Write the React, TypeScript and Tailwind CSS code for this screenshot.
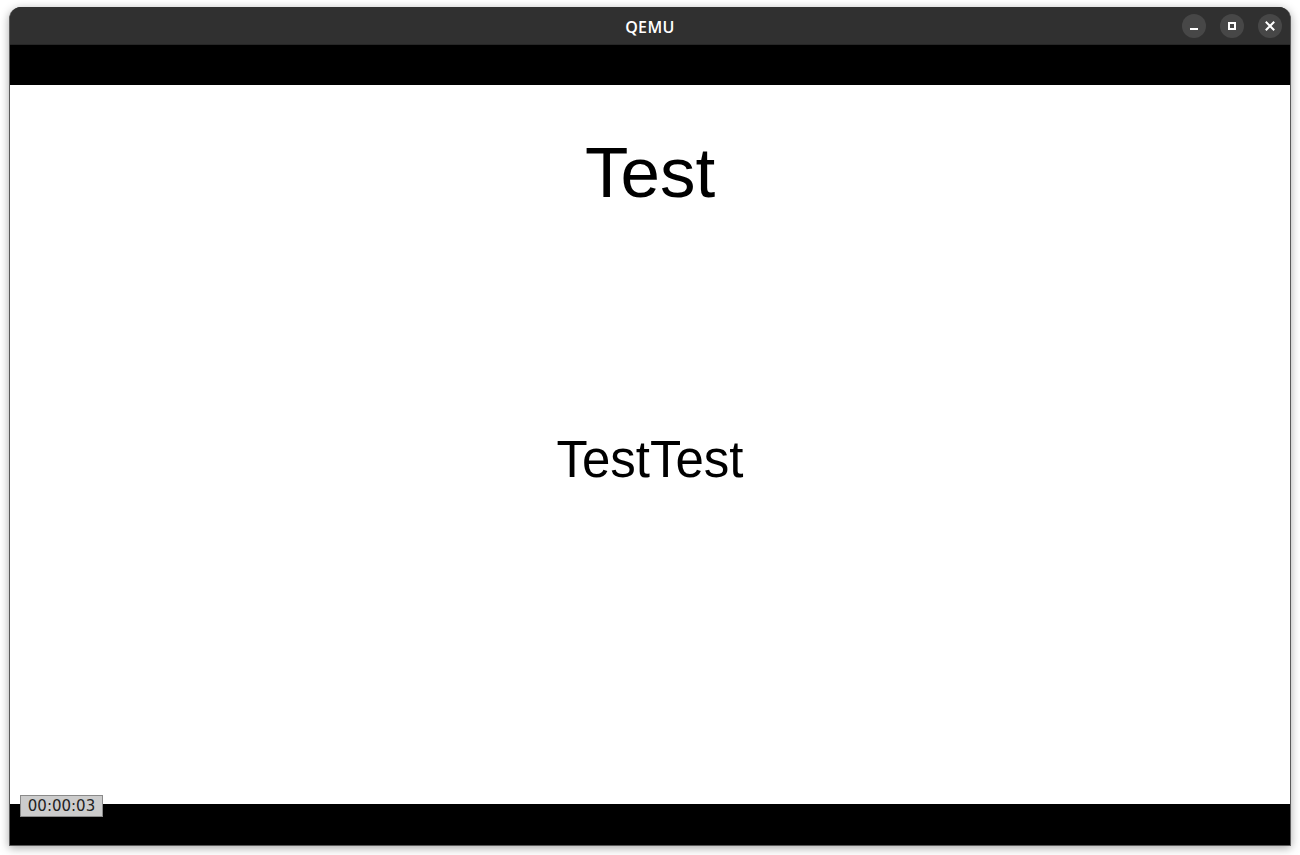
import React from "react";

export default function App() {
  return (
    <div className="w-[1300px] h-[855px] bg-white relative overflow-hidden" style={{ fontFamily: '"Liberation Sans", Arial, sans-serif' }}>
      <div className="absolute left-[9px] top-[7px] w-[1282px] h-[839px] rounded-t-[12px] bg-[#303030] shadow-[0_2px_10px_rgba(0,0,0,0.35)] flex flex-col border-x border-b border-[#5a5a5a] overflow-hidden">
        {/* Title bar */}
        <div className="relative h-[38px] shrink-0 bg-[#303030] flex items-center justify-center border-b border-[#262626]">
          <span className="text-white text-[16px] font-semibold tracking-[0.4px] mt-[2px]" style={{ fontFamily: '"Open Sans", "Noto Sans", sans-serif' }}>QEMU</span>
          <div className="absolute right-[8px] top-[7px] flex gap-[14px]">
            <div className="w-[24px] h-[24px] rounded-full bg-[#474747] flex items-center justify-center">
              <div className="w-[8px] h-[2px] bg-white mt-[5px]" />
            </div>
            <div className="w-[24px] h-[24px] rounded-full bg-[#474747] flex items-center justify-center">
              <div className="w-[8px] h-[8px] border-[2px] border-white" />
            </div>
            <div className="w-[24px] h-[24px] rounded-full bg-[#474747] flex items-center justify-center">
              <svg width="10" height="10" viewBox="0 0 10 10">
                <path d="M1.5 1.5 L8.5 8.5 M8.5 1.5 L1.5 8.5" stroke="white" strokeWidth="2" strokeLinecap="square" />
              </svg>
            </div>
          </div>
        </div>
        {/* Black top */}
        <div className="h-[40px] shrink-0 bg-black" />
        {/* Content */}
        <div className="relative h-[719px] shrink-0 bg-white flex flex-col items-center">
          <div className="mt-[52px] text-[71px] leading-none text-black">Test</div>
          <div className="mt-[226px] text-[51px] leading-none text-black">TestTest</div>
        </div>
        {/* Black bottom */}
        <div className="flex-1 bg-black relative" />
        <div className="absolute left-[10px] top-[788px] w-[83px] h-[22px] bg-[#cccccc] border border-[#8a8a8a] flex items-center justify-center text-[15px] text-[#222]" style={{ fontFamily: '"DejaVu Sans", sans-serif' }}>
          00:00:03
        </div>
      </div>
    </div>
  );
}
